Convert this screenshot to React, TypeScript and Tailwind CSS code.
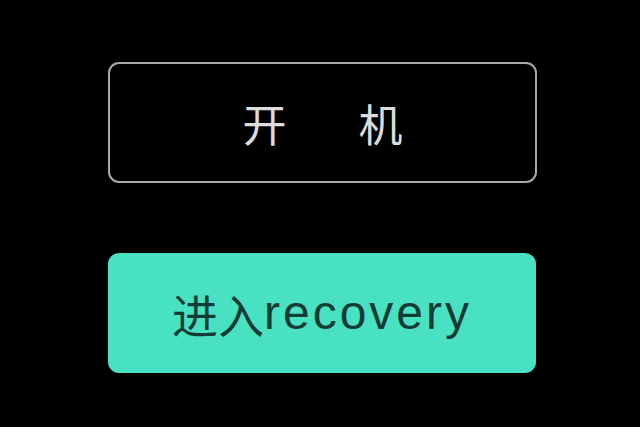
import React from "react";

export default function App() {
  return (
    <div className="w-[640px] h-[427px] bg-black flex flex-col pl-[108px] pt-[62px] gap-[70px] font-['Noto_Sans_CJK_SC','Liberation_Sans',sans-serif]">
      <div className="w-[429px] h-[121px] rounded-[11px] border-[2.5px] border-[#a9a9a9] flex items-center justify-center gap-[72px] text-[#dcdcdc] text-[44px] leading-none">
        <span>开</span>
        <span>机</span>
      </div>
      <div className="w-[428px] h-[120px] rounded-[11px] bg-[#48e2c3] flex items-center justify-center text-[#143c34] leading-none">
        <span className="text-[46px] font-['Noto_Sans_CJK_SC',sans-serif]">进入</span>
        <span className="text-[48px] tracking-[3px] font-['Liberation_Sans',sans-serif]">recovery</span>
      </div>
    </div>
  );
}
